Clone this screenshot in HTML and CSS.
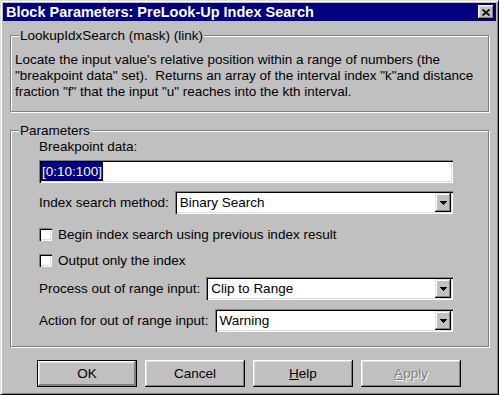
FILE: index.html
```html
<!DOCTYPE html>
<html lang="en">
<head>
    <meta charset="UTF-8">
    <title>Block Parameters: PreLook-Up Index Search</title>
    <link rel="stylesheet" href="styles.css">
</head>
<body>
    <div class="window">
        <div class="titlebar">
            <span class="title">Block Parameters: PreLook-Up Index Search</span>
            <button class="close-btn" type="button">
                <svg width="8" height="7" viewBox="0 0 8 7"><path d="M0.5 0.5 7.5 6.5 M7.5 0.5 0.5 6.5" stroke="#000" stroke-width="1.6" fill="none"/></svg>
            </button>
        </div>
        <div class="dialog-body">
            <fieldset class="group group-desc">
                <legend>LookupIdxSearch (mask) (link)</legend>
                <p class="desc">Locate the input value's relative position within a range of numbers (the<br>"breakpoint data" set).&nbsp; Returns an array of the interval index "k"and distance<br>fraction "f" that the input "u" reaches into the kth interval.</p>
            </fieldset>
            <fieldset class="group group-params">
                <legend>Parameters</legend>
                <div class="params">
                    <div class="field-label">Breakpoint data:</div>
                    <div class="edit-box"><span class="selected-text">[0:10:100]</span></div>

                    <div class="field-row row-search">
                        <span class="row-label">Index search method:</span>
                        <div class="dropdown">
                            <span class="dropdown-value">Binary Search</span>
                            <span class="dropdown-btn"><svg width="7" height="4" viewBox="0 0 7 4"><path d="M0 0h7v1h-1v1h-1v1h-1v1h-1v-1h-1v-1h-1v-1h-1z" fill="#000"/></svg></span>
                        </div>
                    </div>

                    <div class="check-row row-begin">
                        <span class="checkbox"></span>
                        <span>Begin index search using previous index result</span>
                    </div>
                    <div class="check-row row-output">
                        <span class="checkbox"></span>
                        <span>Output only the index</span>
                    </div>

                    <div class="field-row row-process">
                        <span class="row-label">Process out of range input:</span>
                        <div class="dropdown">
                            <span class="dropdown-value">Clip to Range</span>
                            <span class="dropdown-btn"><svg width="7" height="4" viewBox="0 0 7 4"><path d="M0 0h7v1h-1v1h-1v1h-1v1h-1v-1h-1v-1h-1v-1h-1z" fill="#000"/></svg></span>
                        </div>
                    </div>

                    <div class="field-row row-action">
                        <span class="row-label">Action for out of range input:</span>
                        <div class="dropdown">
                            <span class="dropdown-value">Warning</span>
                            <span class="dropdown-btn"><svg width="7" height="4" viewBox="0 0 7 4"><path d="M0 0h7v1h-1v1h-1v1h-1v1h-1v-1h-1v-1h-1v-1h-1z" fill="#000"/></svg></span>
                        </div>
                    </div>
                </div>
            </fieldset>
            <div class="button-row">
                <button class="btn btn-default" type="button">OK</button>
                <button class="btn" type="button">Cancel</button>
                <button class="btn" type="button"><u>H</u>elp</button>
                <button class="btn btn-disabled" type="button"><u>A</u>pply</button>
            </div>
        </div>
    </div>
</body>
</html>
```

FILE: styles.css
```css
body {
    margin: 0;
    font-family: "Liberation Sans", Arial, sans-serif;
    font-size: 13.5px;
    line-height: 15px;
    background-color: #c0c0c0;
    color: #000;
}

.window {
    width: 499px;
    height: 395px;
    box-sizing: border-box;
    background: #c0c0c0;
    border: 1px solid;
    border-color: #dfdfdf #000 #000 #dfdfdf;
    box-shadow: inset 1px 1px #fff, inset -1px -1px #808080;
    padding: 2px;
}

.titlebar {
    height: 18px;
    background: #000080;
    color: #fff;
    display: flex;
    align-items: center;
    justify-content: space-between;
    padding: 0 2px 0 3px;
}

.title {
    font-weight: bold;
    font-size: 14.5px;
}

.close-btn {
    width: 16px;
    height: 14px;
    padding: 0;
    border: none;
    background: #c0c0c0;
    box-shadow: inset -1px -1px #000, inset 1px 1px #fff, inset -2px -2px #808080, inset 2px 2px #dfdfdf;
    display: flex;
    align-items: center;
    justify-content: center;
}

.dialog-body {
    padding: 7px 7px 0;
}

.group {
    margin: 0;
    padding: 0 4px;
    border: 1px solid #808080;
    box-shadow: 1px 1px 0 #fff, inset 1px 1px 0 #fff;
}

.group legend {
    margin-left: 4px;
    padding: 0 1px;
    background: #c0c0c0;
}

.desc {
    margin: 9px 0 11px;
    line-height: 16px;
}

.group-params {
    margin-top: 11px;
}

.params {
    margin: 0 31px 14px 24px;
}

.field-label {
    margin-top: 1px;
}

.edit-box {
    margin-top: 6px;
    height: 23px;
    box-sizing: border-box;
    padding: 2px;
    background: #fff;
    box-shadow: inset 1px 1px #808080, inset 2px 2px #000, inset -1px -1px #fff, inset -2px -2px #dfdfdf;
    display: flex;
}

.selected-text {
    background: #000080;
    color: #fff;
    display: flex;
    align-items: center;
    padding: 0 1px;
}

.field-row {
    display: flex;
    align-items: center;
    gap: 6px;
}

.row-search {
    margin-top: 8px;
}

.row-process {
    margin-top: 9px;
}

.row-action {
    margin-top: 9px;
}

.dropdown {
    flex: 1;
    height: 23px;
    box-sizing: border-box;
    padding: 2px;
    background: #fff;
    box-shadow: inset 1px 1px #808080, inset 2px 2px #000, inset -1px -1px #fff, inset -2px -2px #dfdfdf;
    display: flex;
    align-items: center;
}

.dropdown-value {
    flex: 1;
    padding-left: 3px;
}

.dropdown-btn {
    width: 16px;
    height: 19px;
    background: #c0c0c0;
    box-shadow: inset -1px -1px #000, inset 1px 1px #dfdfdf, inset -2px -2px #808080, inset 2px 2px #fff;
    display: flex;
    align-items: center;
    justify-content: center;
}

.check-row {
    display: flex;
    align-items: center;
    gap: 6px;
    height: 15px;
}

.row-begin {
    margin-top: 13px;
}

.row-output {
    margin-top: 11px;
}

.checkbox {
    width: 13px;
    height: 13px;
    background: #fff;
    box-shadow: inset 1px 1px #808080, inset 2px 2px #000, inset -1px -1px #fff, inset -2px -2px #dfdfdf;
}

.button-row {
    display: flex;
    gap: 8px;
    padding-left: 27px;
    margin-top: 13px;
}

.btn {
    width: 100px;
    height: 27px;
    padding: 0;
    border: none;
    background: #c0c0c0;
    font-family: inherit;
    font-size: 13.5px;
    color: #000;
    box-shadow: inset -1px -1px #000, inset 1px 1px #fff, inset -2px -2px #808080, inset 2px 2px #dfdfdf;
}

.btn-default {
    border: 1px solid #000;
    box-shadow: inset -1px -1px #808080, inset 1px 1px #fff, inset -2px -2px #808080, inset 2px 2px #dfdfdf;
}

.btn-disabled {
    color: #808080;
    text-shadow: 1px 1px 0 #fff;
}
```
